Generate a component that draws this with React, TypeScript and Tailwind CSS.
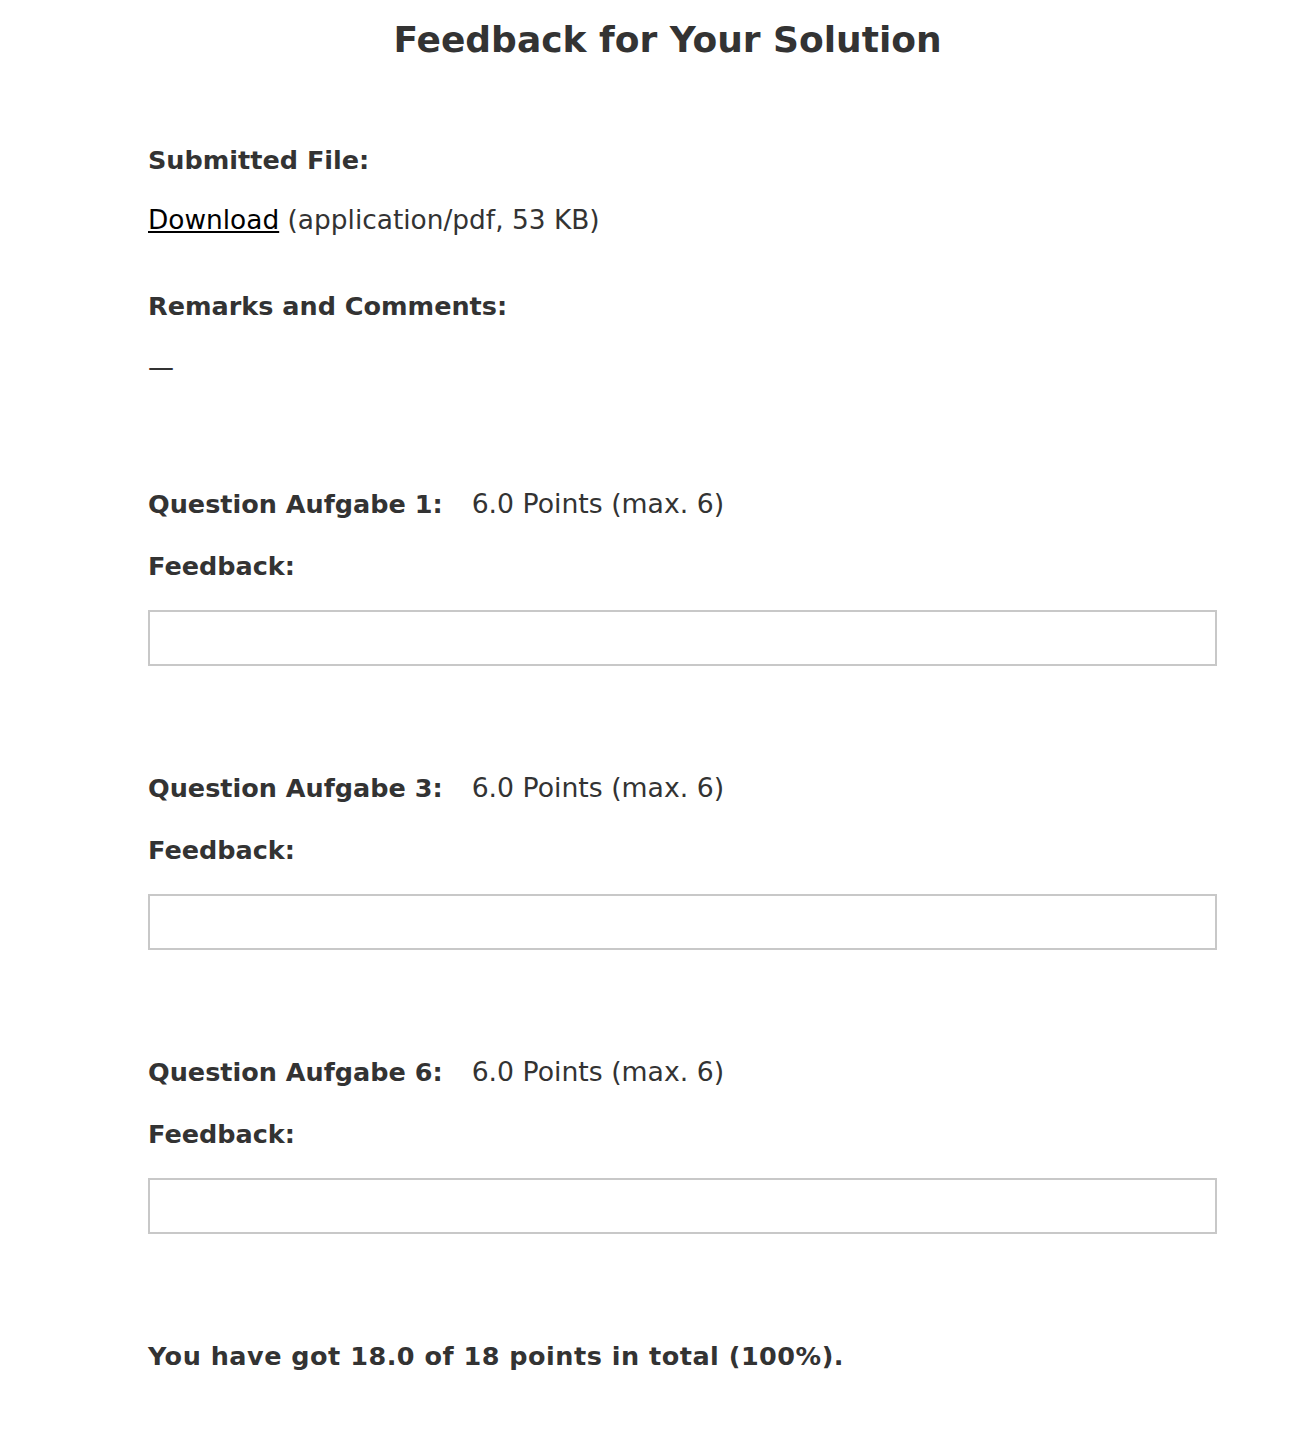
export default function App() {
  const questions = [
    { name: 'Aufgabe 1', points: '6.0', max: 6 },
    { name: 'Aufgabe 3', points: '6.0', max: 6 },
    { name: 'Aufgabe 6', points: '6.0', max: 6 },
  ];

  return (
    <div className="min-h-[1452px] bg-white text-[#333333] font-['Verdana','DejaVu_Sans',sans-serif]">
      {/* Title */}
      <h1 className="pt-[18px] pl-[21px] text-center text-[36px] font-bold leading-[44px]">Feedback for Your Solution</h1>

      <div className="pl-[148px] pr-[97px]">
        {/* Submitted file */}
        <div className="mt-[80px] text-[25.5px] font-bold leading-[36px]">Submitted File:</div>
        <div className="mt-[24px] text-[26.4px] leading-[36px]">
          <a href="#" className="text-black underline">Download</a> (application/pdf, 53 KB)
        </div>

        {/* Remarks */}
        <div className="mt-[50px] text-[25.5px] font-bold leading-[36px]">Remarks and Comments:</div>
        <div className="mt-[25px] text-[26px] leading-[36px]">—</div>

        {/* Questions */}
        <div className="mt-[101px] flex flex-col gap-[104px]">
          {questions.map((q) => (
            <div key={q.name}>
              <div className="flex items-baseline leading-[36px]">
                <span className="text-[25.5px] font-bold">Question {q.name}:</span>
                <span className="ml-[29px] text-[26.7px]">
                  {q.points} Points (max. {q.max})
                </span>
              </div>
              <div className="mt-[26px] text-[25.5px] font-bold leading-[36px]">Feedback:</div>
              <div className="mt-[26px] h-[56px] border-2 border-[#c8c8c8] bg-white" />
            </div>
          ))}
        </div>

        {/* Total */}
        <div className="mt-[104px] text-[25.5px] font-bold leading-[36px] tracking-[0.5px]">
          You have got 18.0 of 18 points in total (100%).
        </div>
      </div>
    </div>
  );
}
